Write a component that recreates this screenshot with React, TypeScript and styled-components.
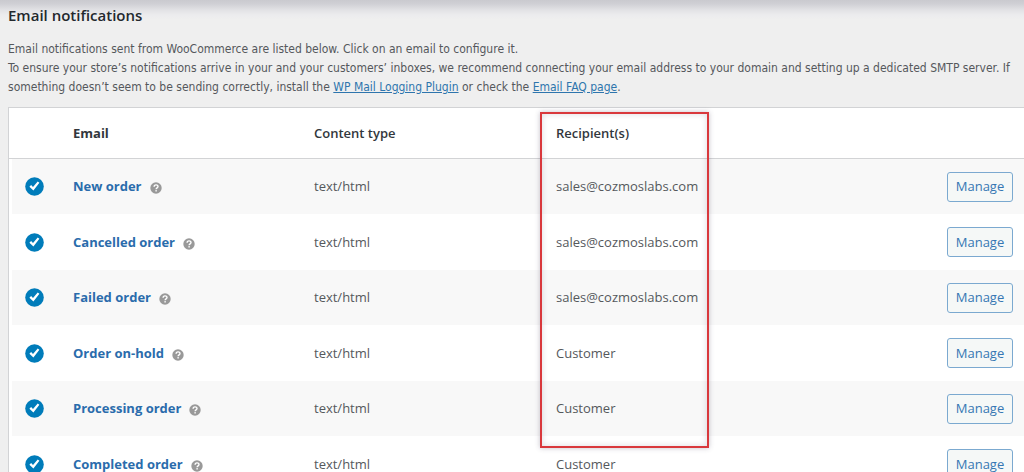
import React from "react";
import styled, { createGlobalStyle } from "styled-components";

const GlobalStyle = createGlobalStyle`
  *, *::before, *::after { box-sizing: border-box; }
  body {
    margin: 0;
    background: #efefef;
    color: #55585c;
    font: 13px/19px "Open Sans", "Noto Sans", sans-serif;
  }
`;

const Page = styled.main`
  height: 100vh;
  overflow: hidden;
  padding: 5px 0 0 8px;
  background: linear-gradient(#cacacf 0, #d0d0d5 4px, #e2e2e5 10px, #ececee 15px, #efefef 20px);
`;

const Title = styled.h2`
  margin: 0 0 15px;
  font-size: 15px;
  line-height: 20px;
  font-weight: 600;
  color: #23282d;
`;

const Intro = styled.p`
  margin: 0 0 10px;
  font-family: "DejaVu Sans Condensed", "Open Sans", sans-serif;
  font-size: 12px;
`;

const TextLink = styled.a`
  color: #2e75ad;
`;

const TableArea = styled.div`
  position: relative;
`;

const EmailTable = styled.table`
  width: 100%;
  table-layout: fixed;
  border-collapse: separate;
  border-spacing: 0;
  border: 1px solid #d2d3d5;
  border-right: 0;
  background: #fff;
`;

const Column = styled.col<{ $width?: number }>`
  width: ${({ $width }) => ($width ? `${$width}px` : "auto")};
`;

const HeadCell = styled.th<{ $strong?: boolean }>`
  height: 51px;
  padding: 0 16px;
  border-bottom: 1px solid #d2d3d5;
  text-align: left;
  font-weight: ${({ $strong }) => ($strong ? 700 : 600)};
  color: #32373c;
`;

const Cell = styled.td`
  height: 55px;
  padding: 0 16px;
`;

const Row = styled.tr`
  &:nth-child(odd) td { background: #f8f8f8; }
  &:nth-child(even) td { height: 56px; }
`;

const StatusCell = styled(Cell)`
  padding: 0 0 0 13px;
  border-left: 3px solid #fff;
`;

const ActionCell = styled(Cell)`
  padding: 0 11px 0 0;
  text-align: right;
`;

const NameGroup = styled.div`
  display: flex;
  align-items: center;
  gap: 8px;
`;

const EmailLink = styled.a`
  color: #2a6cac;
  font-weight: 700;
  text-decoration: none;
`;

const StatusIcon = styled.svg`
  display: block;
  width: 19px;
  height: 19px;
`;

const HelpIcon = styled.svg`
  display: block;
  width: 12px;
  height: 12px;
  margin-top: 3px;
`;

const ManageButton = styled.button`
  width: 66px;
  height: 30px;
  padding: 0;
  border: 1px solid #7ba9d0;
  border-radius: 3px;
  background: #f5f8f7;
  color: #3577b3;
  font: inherit;
`;

const Highlight = styled.div`
  position: absolute;
  top: 5px;
  left: 532px;
  width: 169px;
  height: 336px;
  border: 2px solid #d9383c;
  box-shadow: 0 0 5px rgba(60, 50, 80, 0.3), inset 0 0 6px rgba(60, 50, 80, 0.18);
  pointer-events: none;
`;

const emails = [
  { name: "New order", recipient: "sales@cozmoslabs.com" },
  { name: "Cancelled order", recipient: "sales@cozmoslabs.com" },
  { name: "Failed order", recipient: "sales@cozmoslabs.com" },
  { name: "Order on-hold", recipient: "Customer" },
  { name: "Processing order", recipient: "Customer" },
  { name: "Completed order", recipient: "Customer" },
];

const Enabled = () => (
  <StatusIcon viewBox="0 0 19 19" role="img" aria-label="Enabled">
    <circle cx="9.5" cy="9.5" r="9.3" fill="#007cba" />
    <path d="M4.4 9.7 6.1 8.1 8 9.9 12.7 4.4 14.4 5.8 8.4 13.6Z" fill="#fff" />
  </StatusIcon>
);

const Help = () => (
  <HelpIcon viewBox="0 0 12 12" role="img" aria-label="Help">
    <circle cx="6" cy="6" r="5.7" fill="#999" />
    <path d="M4.1 4.7C4.1 2.3 8 2.3 8 4.5 8 5.9 6.1 5.8 6.1 7.3" fill="none" stroke="#fff" strokeWidth="1.4" />
    <rect x="5.4" y="8.1" width="1.4" height="1.4" fill="#fff" />
  </HelpIcon>
);

export default function App() {
  return (
    <Page>
      <GlobalStyle />
      <Title>Email notifications</Title>
      <Intro>
        Email notifications sent from WooCommerce are listed below. Click on an email to configure it.
        <br />
        To ensure your store’s notifications arrive in your and your customers’ inboxes, we recommend
        connecting your email address to your domain and setting up a dedicated SMTP server. If something
        doesn’t seem to be sending correctly, install the <TextLink href="#logging">WP Mail Logging Plugin</TextLink> or
        check the <TextLink href="#faq">Email FAQ page</TextLink>.
      </Intro>
      <TableArea>
        <EmailTable>
          <colgroup>
            <Column $width={48} />
            <Column $width={241} />
            <Column $width={242} />
            <Column />
            <Column $width={120} />
          </colgroup>
          <thead>
            <tr>
              <HeadCell aria-label="Status" />
              <HeadCell $strong>Email</HeadCell>
              <HeadCell>Content type</HeadCell>
              <HeadCell>Recipient(s)</HeadCell>
              <HeadCell aria-label="Actions" />
            </tr>
          </thead>
          <tbody>
            {emails.map(({ name, recipient }) => (
              <Row key={name}>
                <StatusCell><Enabled /></StatusCell>
                <Cell>
                  <NameGroup>
                    <EmailLink href="#email">{name}</EmailLink>
                    <Help />
                  </NameGroup>
                </Cell>
                <Cell>text/html</Cell>
                <Cell>{recipient}</Cell>
                <ActionCell><ManageButton type="button">Manage</ManageButton></ActionCell>
              </Row>
            ))}
          </tbody>
        </EmailTable>
        <Highlight />
      </TableArea>
    </Page>
  );
}
